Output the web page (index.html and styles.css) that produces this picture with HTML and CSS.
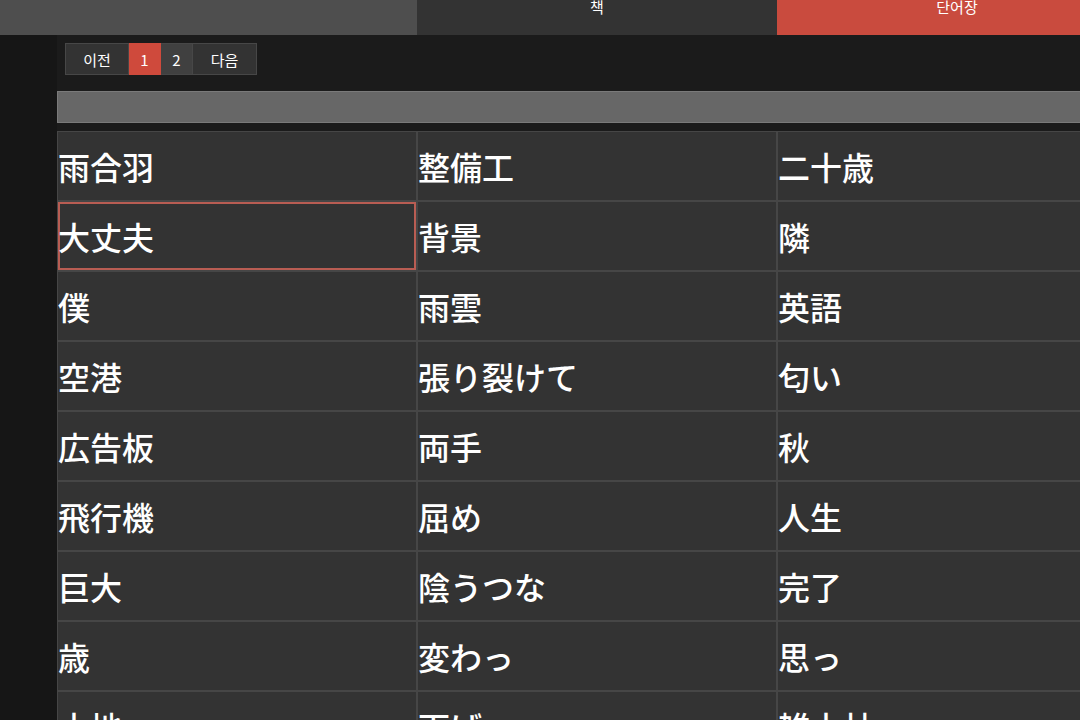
FILE: index.html
```html
<!DOCTYPE html>
<html lang="ja">
<head>
<meta charset="utf-8">
<title>단어장</title>
<link rel="stylesheet" href="styles.css">
</head>
<body>
<div class="tabs">
  <div class="tab tab-first"></div>
  <div class="tab tab-book">책</div>
  <div class="tab tab-active">단어장</div>
</div>
<div class="main">
  <div class="sidebar"></div>
  <div class="content">
    <div class="pager">
      <button class="pg pg-text">이전</button>
      <button class="pg pg-num pg-current">1</button>
      <button class="pg pg-num pg-other">2</button>
      <button class="pg pg-text">다음</button>
    </div>
    <div class="band"></div>
    <div class="grid">
      <div class="cell">雨合羽</div><div class="cell">整備工</div><div class="cell">二十歳</div>
      <div class="cell selected">大丈夫</div><div class="cell">背景</div><div class="cell">隣</div>
      <div class="cell">僕</div><div class="cell">雨雲</div><div class="cell">英語</div>
      <div class="cell">空港</div><div class="cell">張り裂けて</div><div class="cell">匂い</div>
      <div class="cell">広告板</div><div class="cell">両手</div><div class="cell">秋</div>
      <div class="cell">飛行機</div><div class="cell">屈め</div><div class="cell">人生</div>
      <div class="cell">巨大</div><div class="cell">陰うつな</div><div class="cell">完了</div>
      <div class="cell">歳</div><div class="cell">変わっ</div><div class="cell">思っ</div>
      <div class="cell">土地</div><div class="cell">下げ</div><div class="cell">雑木林</div>
    </div>
  </div>
</div>
</body>
</html>
```

FILE: styles.css
```css
html, body {
  margin: 0;
  padding: 0;
  width: 1080px;
  height: 720px;
  overflow: hidden;
  background: #1b1b1b;
  font-family: "Noto Sans CJK KR", "Noto Sans CJK JP", sans-serif;
  color: #ffffff;
}

.tabs {
  display: flex;
  height: 35px;
  overflow: hidden;
}

.tab {
  flex: 0 0 360px;
  height: 35px;
  font-size: 15px;
  line-height: 13px;
  text-align: center;
}

.tab-first {
  flex-basis: 417px;
  background: #4e4e4e;
}

.tab-book {
  background: #333333;
}

.tab-active {
  background: #c94b3e;
}

.main {
  display: flex;
  height: 685px;
  overflow: hidden;
}

.sidebar {
  flex: 0 0 57px;
  background: #161616;
}

.content {
  flex: 0 0 1100px;
  display: flex;
  flex-direction: column;
}

.pager {
  flex-shrink: 0;
  display: flex;
  margin: 8px 0 0 8px;
  height: 32px;
}

.pg {
  font-family: "Noto Sans CJK KR", sans-serif;
  font-size: 15px;
  color: #ffffff;
  border: 1px solid #474747;
  margin: 0;
  padding: 0;
  height: 32px;
  background: #333333;
}

.pg + .pg {
  border-left: none;
}

.pg-text {
  width: 64px;
}

.pg-num {
  width: 32px;
}

.pg-current {
  background: #cf4a3c;
  border-color: #cf4a3c;
}

.pg-other {
  background: #404040;
}

.band {
  flex-shrink: 0;
  box-sizing: border-box;
  margin-top: 16px;
  height: 32px;
  background: #676767;
  border: 1px solid #7a7a7a;
  border-right: none;
}

.grid {
  flex-shrink: 0;
  margin-top: 8px;
  display: grid;
  grid-template-columns: repeat(3, 360px);
  grid-auto-rows: 70px;
}

.cell {
  box-sizing: border-box;
  background: #333333;
  border: 1px solid #464646;
  font-family: "Noto Sans CJK JP", sans-serif;
  font-weight: 500;
  font-size: 32px;
  line-height: 68px;
  padding-left: 0;
  white-space: nowrap;
}

.selected {
  box-shadow: inset 0 0 0 2px #b95d53;
}
```
